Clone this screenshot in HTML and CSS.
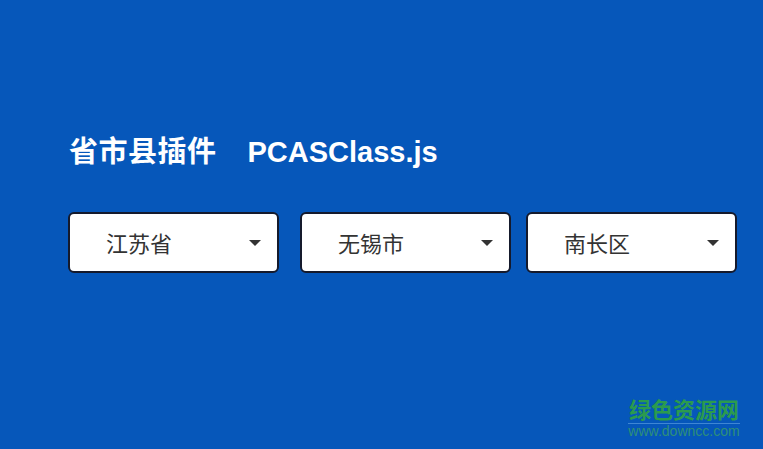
FILE: index.html
```html
<!DOCTYPE html>
<html>
<head>
<meta charset="utf-8">
<link rel="stylesheet" href="styles.css">
</head>
<body>
<div class="page">
  <h1 class="title"><span class="cn">省市县插件</span><span class="en">PCASClass.js</span></h1>
  <div class="selects">
    <div class="sel s1"><span class="val">江苏省</span><i class="arrow"></i></div>
    <div class="sel s2"><span class="val">无锡市</span><i class="arrow"></i></div>
    <div class="sel s3"><span class="val">南长区</span><i class="arrow"></i></div>
  </div>
</div>
<div class="wm">
  <div class="wm-cn">绿色资源网</div>
  <div class="wm-en">www.downcc.com</div>
</div>
</body>
</html>
```
FILE: styles.css
```css
html, body {
  margin: 0;
  padding: 0;
  height: 100%;
}
body {
  background: #0657ba;
  font-family: "Noto Sans CJK SC", "Liberation Sans", sans-serif;
  overflow: hidden;
  position: relative;
}
.page {
  padding: 129px 0 0 69px;
}
.title {
  margin: 0;
  color: #ffffff;
  font-family: "Liberation Sans", "Noto Sans CJK SC", sans-serif;
  font-size: 29px;
  font-weight: 700;
  line-height: 40px;
  height: 41px;
  white-space: nowrap;
}
.title .cn {
  font-family: "Noto Sans CJK SC", sans-serif;
  letter-spacing: 0.5px;
}
.title .en {
  margin-left: 31px;
  font-family: "Liberation Sans", sans-serif;
}
.selects {
  display: flex;
  margin-top: 42px;
  margin-left: -1px;
}
.sel {
  box-sizing: border-box;
  width: 211px;
  height: 61px;
  background: #ffffff;
  border: 2px solid #151a2c;
  border-radius: 6px;
  display: flex;
  align-items: center;
  padding-left: 36px;
  padding-right: 16px;
  color: #333333;
  font-size: 22px;
}
.val {
  flex: 1;
  line-height: 22px;
  margin-top: -2px;
}
.s2 { margin-left: 21px; }
.s3 { margin-left: 15px; }
.arrow {
  width: 0;
  height: 0;
  border-left: 6.5px solid transparent;
  border-right: 6.5px solid transparent;
  border-top: 6px solid #333333;
  margin-top: 1px;
}
.wm {
  position: absolute;
  left: 628px;
  top: 397px;
  width: 112px;
  text-align: center;
}
.wm-cn {
  color: #2b9b4e;
  font-size: 22px;
  font-weight: 700;
  line-height: 22px;
  padding-bottom: 4px;
  border-bottom: 1px solid #3f86d4;
  white-space: nowrap;
}
.wm-en {
  color: #2e8f78;
  font-family: "Liberation Sans", sans-serif;
  font-size: 14px;
  line-height: 14px;
  white-space: nowrap;
}
```
